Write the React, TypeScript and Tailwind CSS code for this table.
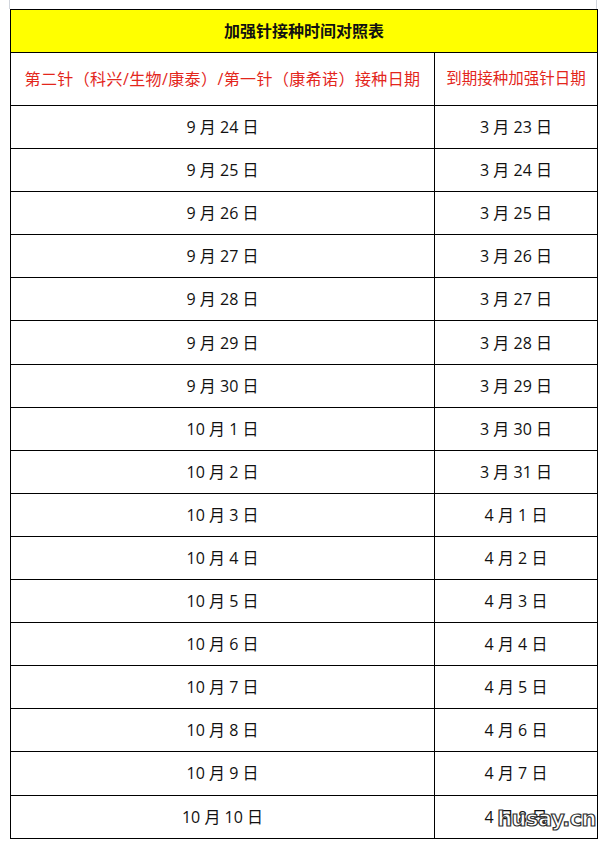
const rows: [string, string][] = [
  ["9 月 24 日", "3 月 23 日"],
  ["9 月 25 日", "3 月 24 日"],
  ["9 月 26 日", "3 月 25 日"],
  ["9 月 27 日", "3 月 26 日"],
  ["9 月 28 日", "3 月 27 日"],
  ["9 月 29 日", "3 月 28 日"],
  ["9 月 30 日", "3 月 29 日"],
  ["10 月 1 日", "3 月 30 日"],
  ["10 月 2 日", "3 月 31 日"],
  ["10 月 3 日", "4 月 1 日"],
  ["10 月 4 日", "4 月 2 日"],
  ["10 月 5 日", "4 月 3 日"],
  ["10 月 6 日", "4 月 4 日"],
  ["10 月 7 日", "4 月 5 日"],
  ["10 月 8 日", "4 月 6 日"],
  ["10 月 9 日", "4 月 7 日"],
  ["10 月 10 日", "4 月 8 日"],
]

const font = { fontFamily: '"Open Sans", "Noto Sans CJK SC", sans-serif' }

export default function App() {
  return (
    <div className="relative h-[841px] w-[606px] bg-white pt-[9px] pl-[10px]" style={font}>
      {/* page corner marks */}
      <div className="absolute left-[9px] top-0 h-[9px] w-px bg-gray-300" />
      <div className="absolute right-[9px] top-0 h-[9px] w-px bg-gray-300" />

      <table className="w-[587px] table-fixed border-collapse text-center text-[#111]">
        <colgroup>
          <col className="w-[424px]" />
          <col className="w-[163px]" />
        </colgroup>
        <thead>
          <tr className="h-[43px] bg-[#ffff00]">
            <th colSpan={2} className="border border-black text-[16px] font-bold">
              加强针接种时间对照表
            </th>
          </tr>
          <tr className="h-[53px]">
            <th className="border border-black text-[16px] font-normal tracking-[0.4px] text-[#e3261c]">
              第二针（科兴/生物/康泰）/第一针（康希诺）接种日期
            </th>
            <th className="border border-black text-[15.5px] font-normal text-[#e3261c]">
              到期接种加强针日期
            </th>
          </tr>
        </thead>
        <tbody>
          {rows.map(([a, b]) => (
            <tr key={a} className="h-[43.1px]">
              <td className="border border-black text-[16px]">{a}</td>
              <td className="border border-black text-[16px]">{b}</td>
            </tr>
          ))}
        </tbody>
      </table>

      {/* watermark */}
      <div
        className="absolute bottom-[6px] right-[10px] text-[21px] font-extrabold tracking-tight text-white"
        style={{
          fontFamily: '"DejaVu Sans", sans-serif',
          WebkitTextStroke: "1.2px #333",
        }}
      >
        husay.cn
      </div>
    </div>
  )
}
